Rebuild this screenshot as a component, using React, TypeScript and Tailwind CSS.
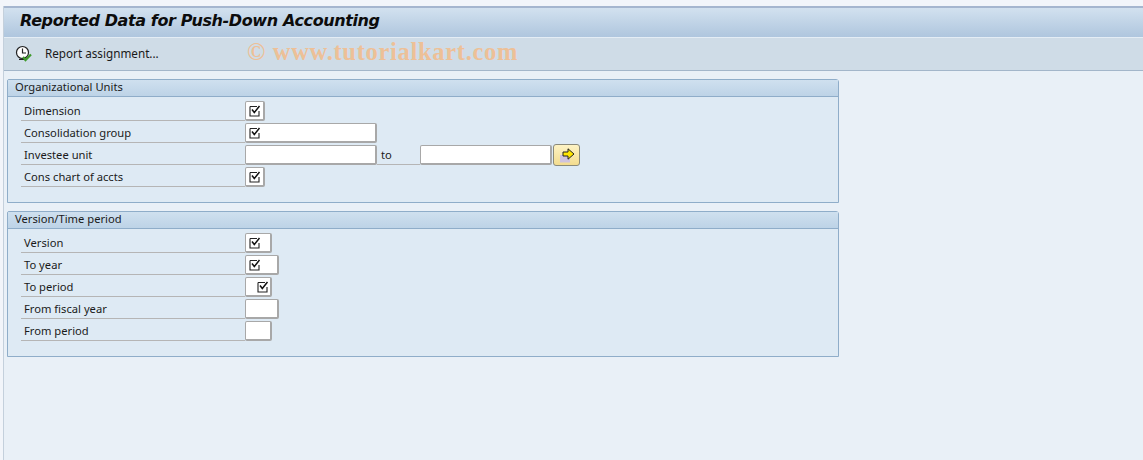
const FONT = "font-['Noto_Sans','Liberation_Sans',sans-serif]";

function CheckGlyph() {
  return (
    <svg width="12" height="12" viewBox="0 0 12 12" className="shrink-0">
      <path d="M1 1.5h7M1 1.5v9.5h9V6" fill="none" stroke="#222" strokeWidth="1.1" />
      <path d="M3 4.5l2.3 3L10.5 1" fill="none" stroke="#111" strokeWidth="1.5" />
    </svg>
  );
}

function Field({ width, checked, alignRight }: { width: string; checked?: boolean; alignRight?: boolean }) {
  return (
    <div
      className={`${width} h-[20px] shrink-0 flex items-center bg-white border border-[#a8a8a8] rounded-[2px] border-b-[2px] border-r-[2px] ${alignRight ? "justify-end pr-[1px]" : "pl-[3px]"}`}
    >
      {checked && <CheckGlyph />}
    </div>
  );
}

function Row({ label, children }: { label: string; children: React.ReactNode }) {
  return (
    <div className="flex items-start h-[22px]">
      <div className="w-[224px] h-[20px] shrink-0 border-b border-[#b5b5b5] pl-[3px] text-[11.2px] leading-[19px] text-[#1a1a1a]">
        {label}
      </div>
      {children}
    </div>
  );
}

function Panel({ title, height, children }: { title: string; height: string; children: React.ReactNode }) {
  return (
    <section className={`w-[832px] ${height} border border-[#8fadc9] rounded-tr-[3px] rounded-tl-[2px] bg-[#deeaf4]`}>
      <div className="h-[17px] border-b border-[#8fadc9] bg-gradient-to-b from-[#cfe0ef] to-[#bdd3e7] pl-[7px] text-[11.2px] leading-[14px] text-[#1a1a1a]">
        {title}
      </div>
      <div className="pl-[13px] pt-[4px]">{children}</div>
    </section>
  );
}

export default function App() {
  return (
    <div className={`${FONT} w-[1143px] h-[460px] overflow-hidden bg-[#f2f5fa] pt-[6px] pl-[3px]`}>
      <div className="h-[454px] bg-[#e9f0f7] border-l border-[#c4d0dc]">
        {/* title bar */}
        <div className="h-[31px] border-t-2 border-[#a5b6cf] bg-gradient-to-b from-[#d2e1ef] to-[#afc6de] pl-[16px] text-[16px] leading-[26px] font-bold italic text-[#0c0c0c] font-['DejaVu_Sans',sans-serif] tracking-[-0.39px]">
          Reported Data for Push-Down Accounting
        </div>

        {/* toolbar */}
        <div className="relative h-[34px] flex items-center border-t border-[#e4edf5] border-b border-b-[#a3b6ca] bg-[#cfdce7] pl-[11px]">
          <svg width="18" height="18" viewBox="0 0 18 18" className="shrink-0">
            <circle cx="7.5" cy="7.5" r="6" fill="#fff" stroke="#222" strokeWidth="1.2" />
            <path d="M7.5 3.5v4.5h3.5M4 14.5h7" fill="none" stroke="#222" strokeWidth="1.2" />
            <path d="M8 12l2.5 3L16 9.5" fill="none" stroke="#3f9a2c" strokeWidth="2.2" />
          </svg>
          <span className="ml-[12px] text-[11.7px] text-[#1a1a1a]">Report assignment...</span>
          <span className="absolute left-[243px] top-[-1px] font-['Liberation_Serif',serif] font-bold text-[24.5px] leading-[30px] tracking-[0.7px] text-[#edc097]">
            © www.tutorialkart.com
          </span>
        </div>

        <div className="pl-[3px] pt-[8px] flex flex-col gap-[8px]">
          <Panel title="Organizational Units" height="h-[124px]">
            <Row label="Dimension">
              <Field width="w-[20px]" checked />
            </Row>
            <Row label="Consolidation group">
              <Field width="w-[132px]" checked />
            </Row>
            <Row label="Investee unit">
              <Field width="w-[132px]" />
              <div className="w-[43px] h-[20px] shrink-0 border-b border-[#b5b5b5] pl-[4px] text-[11.2px] leading-[19px] text-[#1a1a1a]">
                to
              </div>
              <Field width="w-[132px]" />
              <button className="ml-[1px] -mt-[1px] w-[27px] h-[22px] shrink-0 flex items-center justify-center rounded-[3px] border border-[#8a8a7a] bg-gradient-to-b from-[#fdf3c4] to-[#f3dc8e]">
                <svg width="16" height="15" viewBox="0 0 16 15">
                  <rect x="1" y="7" width="10" height="7.5" fill="#cfc3de" />
                  <path d="M4 4h5V0.8L15 6 9 11.2V8H4z" fill="#ffe600" stroke="#222" strokeWidth="1" />
                </svg>
              </button>
            </Row>
            <Row label="Cons chart of accts">
              <Field width="w-[20px]" checked />
            </Row>
          </Panel>

          <Panel title="Version/Time period" height="h-[146px]">
            <Row label="Version">
              <Field width="w-[27px]" checked />
            </Row>
            <Row label="To year">
              <Field width="w-[34px]" checked />
            </Row>
            <Row label="To period">
              <Field width="w-[27px]" checked alignRight />
            </Row>
            <Row label="From fiscal year">
              <Field width="w-[34px]" />
            </Row>
            <Row label="From period">
              <Field width="w-[27px]" />
            </Row>
          </Panel>
        </div>
      </div>
    </div>
  );
}
